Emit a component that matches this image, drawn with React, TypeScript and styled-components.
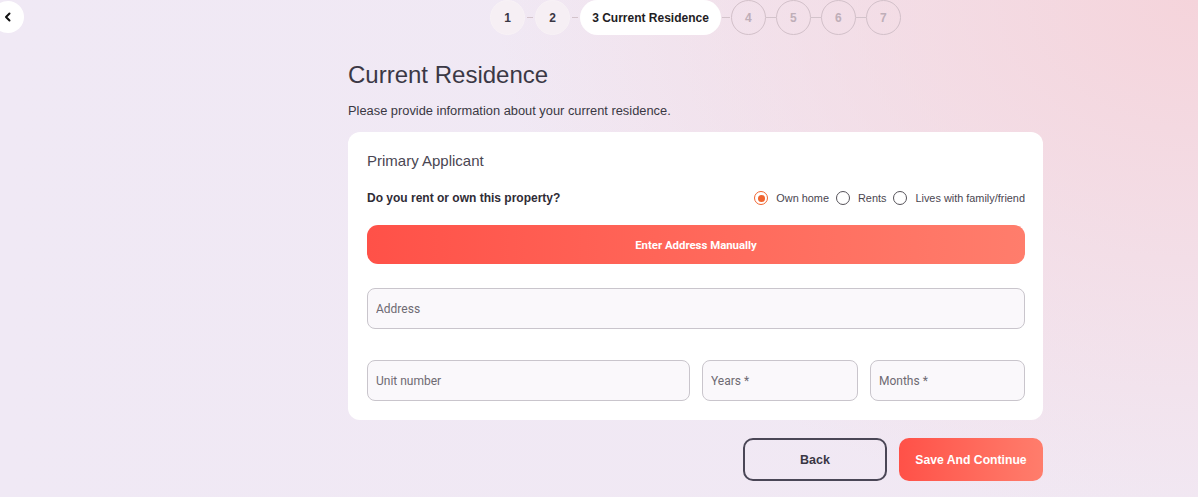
import React from "react";
import styled, { createGlobalStyle } from "styled-components";

const GlobalStyle = createGlobalStyle`
  html, body { margin: 0; padding: 0; }
  body {
    font-family: "Liberation Sans", Arial, sans-serif;
    background: #f1eaf5;
  }
  * { box-sizing: border-box; }
`;

const Page = styled.div`
  position: relative;
  width: 1198px;
  height: 497px;
  overflow: hidden;
  background:
    radial-gradient(ellipse 700px 520px at 100% 0%, rgba(245, 212, 219, 1) 0%, rgba(245, 212, 219, 0.55) 45%, rgba(241, 234, 245, 0) 100%),
    linear-gradient(90deg, #f0e9f5 0%, #f1e8f3 100%);
`;

const BackCircle = styled.button`
  position: absolute;
  left: -8px;
  top: 1px;
  width: 32px;
  height: 32px;
  border-radius: 50%;
  border: none;
  background: #ffffff;
  display: flex;
  align-items: center;
  justify-content: center;
  padding: 0;
  cursor: pointer;
`;

const Column = styled.div`
  width: 695px;
  margin-left: 348px;
  display: flex;
  flex-direction: column;
`;

const Stepper = styled.div`
  display: flex;
  align-items: center;
  justify-content: center;
  height: 35px;
`;

const StepCircle = styled.div<{ $done?: boolean }>`
  width: 35px;
  height: 35px;
  border-radius: 50%;
  display: flex;
  align-items: center;
  justify-content: center;
  font-size: 12px;
  font-weight: 700;
  color: ${(p) => (p.$done ? "#3a3744" : "#bfaeb8")};
  background: ${(p) => (p.$done ? "#f6eff4" : "transparent")};
  border: 1px solid ${(p) => (p.$done ? "#f8f2f6" : "#d2c0c9")};
`;

const StepPill = styled.div`
  height: 35px;
  padding: 0 12px;
  border-radius: 18px;
  background: #ffffff;
  display: flex;
  align-items: center;
  font-size: 12px;
  font-weight: 700;
  color: #1f1d24;
`;

const Connector = styled.div<{ $gap: number }>`
  width: ${(p) => 10 - p.$gap * 2}px;
  margin: 0 ${(p) => p.$gap}px;
  height: 1px;
  background: #d3c3cb;
`;

const Title = styled.h1`
  margin: 26px 0 0;
  font-size: 24px;
  line-height: 28px;
  font-weight: 400;
  color: #3b3845;
`;

const Subtitle = styled.p`
  margin: 14px 0 0;
  font-size: 12.85px;
  line-height: 16px;
  color: #3a3843;
`;

const Card = styled.div`
  margin-top: 13px;
  background: #ffffff;
  border-radius: 12px;
  padding: 19px 18px 19px 19px;
  display: flex;
  flex-direction: column;
`;

const CardTitle = styled.h2`
  margin: 0;
  font-size: 15px;
  line-height: 20px;
  font-weight: 400;
  color: #4a4652;
`;

const QuestionRow = styled.div`
  margin-top: 17px;
  height: 20px;
  display: flex;
  align-items: center;
  justify-content: space-between;
`;

const Question = styled.span`
  font-size: 12px;
  font-weight: 700;
  color: #2f2c36;
`;

const RadioGroup = styled.div`
  display: flex;
  align-items: center;
`;

const RadioLabel = styled.label`
  display: flex;
  align-items: center;
  font-size: 10.9px;
  color: #4a4650;
  margin-left: 7px;
  &:first-child { margin-left: 0; }
`;

const RadioDot = styled.span<{ $checked?: boolean }>`
  width: 14px;
  height: 14px;
  border-radius: 50%;
  border: 1.5px solid ${(p) => (p.$checked ? "#f0642f" : "#555259")};
  display: inline-flex;
  align-items: center;
  justify-content: center;
  margin-right: 8px;
  &::after {
    content: "";
    width: 7px;
    height: 7px;
    border-radius: 50%;
    background: ${(p) => (p.$checked ? "#f0642f" : "transparent")};
  }
`;

const GradientButton = styled.button`
  border: none;
  background: linear-gradient(90deg, #ff5148 0%, #ff6a5c 55%, #ff7d6c 100%);
  color: #ffffff;
  font-weight: 700;
  cursor: pointer;
`;

const ManualButton = styled(GradientButton)`
  margin-top: 17px;
  height: 39px;
  border-radius: 11px;
  font-family: Roboto, "Liberation Sans", sans-serif;
  font-size: 11.4px;
`;

const Field = styled.input`
  height: 41px;
  width: 100%;
  border: 1px solid #c9c5cc;
  border-radius: 8px;
  background: #faf8fb;
  padding: 0 8px;
  font-family: Roboto, "Liberation Sans", sans-serif;
  font-size: 12px;
  color: #333;
  outline: none;
  &::placeholder { color: #6e6a72; }
`;

const AddressWrap = styled.div`
  margin-top: 24px;
`;

const FieldRow = styled.div`
  margin-top: 31px;
  display: grid;
  grid-template-columns: 323px 156px 155px;
  column-gap: 12px;
`;

const Actions = styled.div`
  margin-top: 18px;
  display: flex;
  justify-content: flex-end;
  gap: 12px;
`;

const OutlineButton = styled.button`
  width: 144px;
  height: 43px;
  border-radius: 10px;
  border: 2px solid #4a4656;
  background: transparent;
  font-family: "Liberation Sans", Arial, sans-serif;
  font-size: 12.5px;
  font-weight: 700;
  color: #3a3744;
  cursor: pointer;
`;

const SaveButton = styled(GradientButton)`
  width: 144px;
  height: 43px;
  border-radius: 10px;
  font-family: "Liberation Sans", Arial, sans-serif;
  font-size: 12.2px;
`;

const steps = [1, 2, 3, 4, 5, 6, 7];
const current = 3;

export default function App() {
  return (
    <>
      <GlobalStyle />
      <Page>
        <BackCircle aria-label="Back">
          <svg width="10" height="10" viewBox="0 0 10 10">
            <path d="M6.5 1.5 L3 5 L6.5 8.5" fill="none" stroke="#111" strokeWidth="2" strokeLinecap="round" strokeLinejoin="round" />
          </svg>
        </BackCircle>
        <Column>
          <Stepper>
            {steps.map((s, i) => (
              <React.Fragment key={s}>
                {i > 0 && <Connector $gap={s <= current ? 2 : s === current + 1 ? 1 : 0} />}
                {s === current ? (
                  <StepPill>3 Current Residence</StepPill>
                ) : (
                  <StepCircle $done={s < current}>{s}</StepCircle>
                )}
              </React.Fragment>
            ))}
          </Stepper>
          <Title>Current Residence</Title>
          <Subtitle>Please provide information about your current residence.</Subtitle>
          <Card>
            <CardTitle>Primary Applicant</CardTitle>
            <QuestionRow>
              <Question>Do you rent or own this property?</Question>
              <RadioGroup>
                <RadioLabel><RadioDot $checked />Own home</RadioLabel>
                <RadioLabel><RadioDot />Rents</RadioLabel>
                <RadioLabel><RadioDot />Lives with family/friend</RadioLabel>
              </RadioGroup>
            </QuestionRow>
            <ManualButton>Enter Address Manually</ManualButton>
            <AddressWrap>
              <Field placeholder="Address" />
            </AddressWrap>
            <FieldRow>
              <Field placeholder="Unit number" />
              <Field placeholder="Years *" />
              <Field placeholder="Months *" />
            </FieldRow>
          </Card>
          <Actions>
            <OutlineButton>Back</OutlineButton>
            <SaveButton>Save And Continue</SaveButton>
          </Actions>
        </Column>
      </Page>
    </>
  );
}
